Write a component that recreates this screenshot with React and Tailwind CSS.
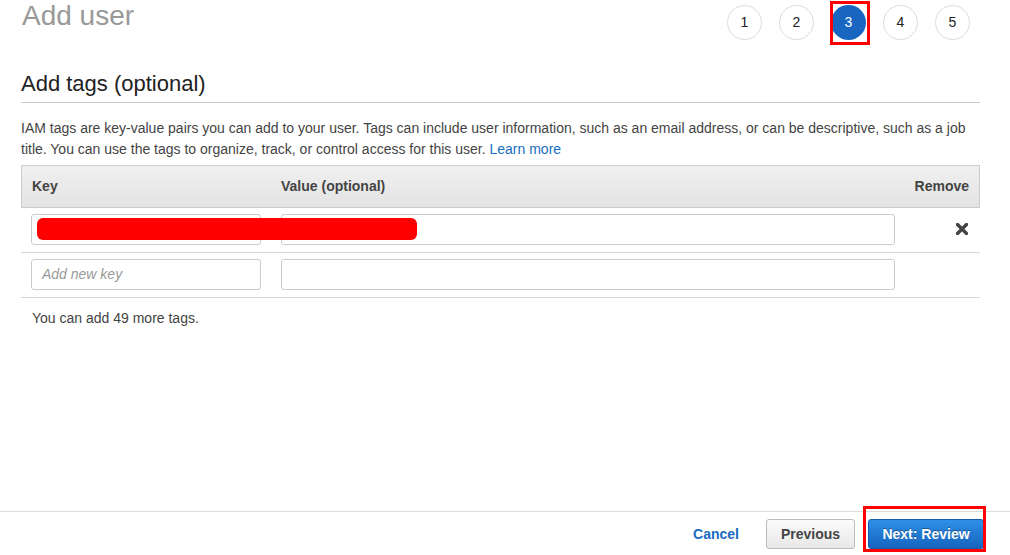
import React from "react";

const font = { fontFamily: '"Liberation Sans", Arial, sans-serif' };

function Step({ n, active }) {
  if (active) {
    return (
      <div className="relative w-[35px] h-[35px]">
        <div className="w-[35px] h-[35px] rounded-full bg-[#1866bf] text-white flex items-center justify-center text-[14px]">
          {n}
        </div>
        <div className="absolute left-[-1px] top-[-4px] w-[40px] h-[44px] border-[3px] border-[#ff0000]" />
      </div>
    );
  }
  return (
    <div className="w-[35px] h-[35px] rounded-full border border-[#dcdcdc] bg-white text-[#222] flex items-center justify-center text-[14px]">
      {n}
    </div>
  );
}

function XIcon() {
  return (
    <svg width="12" height="12" viewBox="0 0 12 12">
      <path d="M1.5 1.5 L10.5 10.5 M10.5 1.5 L1.5 10.5" stroke="#444" strokeWidth="3.4" strokeLinecap="round" />
    </svg>
  );
}

export default function App() {
  return (
    <div style={font} className="w-[1010px] h-[555px] bg-white flex flex-col overflow-hidden text-[#444]">
      <div className="flex-1 pl-[21px] pr-[30px]">
        <div className="h-[72px] flex items-start justify-between">
          <div className="text-[28px] leading-[30px] pt-[1px] text-[#999] pl-[1px]">Add user</div>
          <div className="flex gap-[17px] mt-[5px] mr-[10px]">
            <Step n={1} />
            <Step n={2} />
            <Step n={3} active />
            <Step n={4} />
            <Step n={5} />
          </div>
        </div>
        <div className="text-[22px] leading-[24px] text-[#222] pb-[6px] border-b border-[#cccccc]">
          Add tags (optional)
        </div>
        <p className="mt-[15px] text-[14px] leading-[21px] text-[#444] whitespace-nowrap">
          IAM tags are key-value pairs you can add to your user. Tags can include user information, such as an email address, or can be descriptive, such as a job
          <br />
          title. You can use the tags to organize, track, or control access for this user.{" "}
          <span className="text-[#1a6ec1]">Learn more</span>
        </p>
        <div className="mt-[5px]">
          <div className="grid grid-cols-[250px_634px_1fr] h-[43px] items-center border border-[#cccccc] bg-linear-to-b from-[#f0f0f0] to-[#e3e3e3] text-[14px] font-bold text-[#444]">
            <div className="pl-[10px]">Key</div>
            <div className="pl-[9px]">Value (optional)</div>
            <div className="text-right pr-[10px]">Remove</div>
          </div>
          <div className="grid grid-cols-[250px_634px_1fr] items-center border-b border-[#d5d5d5] pt-[6px] pb-[7px]">
            <div className="pl-[10px] pr-[10px]">
              <div className="h-[31px] border border-[#cccccc] rounded-[3px] bg-white" />
            </div>
            <div className="pl-[10px] pr-[10px]">
              <div className="h-[31px] border border-[#cccccc] rounded-[3px] bg-white" />
            </div>
            <div className="flex justify-end pr-[12px] -mt-[2px]">
              <XIcon />
            </div>
          </div>
          <div className="relative">
            <div className="absolute left-[16px] top-[-35px] w-[380px] h-[22px] rounded-[6px] bg-[#ff0000]" />
          </div>
          <div className="grid grid-cols-[250px_634px_1fr] items-center border-b border-[#d5d5d5] pt-[6px] pb-[7px]">
            <div className="pl-[10px] pr-[10px]">
              <div className="h-[31px] border border-[#cccccc] rounded-[3px] bg-white flex items-center pl-[10px] text-[14px] italic text-[#999]">
                Add new key
              </div>
            </div>
            <div className="pl-[10px] pr-[10px]">
              <div className="h-[31px] border border-[#cccccc] rounded-[3px] bg-white" />
            </div>
            <div />
          </div>
        </div>
        <div className="mt-[10px] pl-[11px] text-[14px] leading-[21px] text-[#444]">You can add 49 more tags.</div>
      </div>
      <div className="h-[44px] border-t border-[#dddddd] flex items-start justify-end pt-[7px] pr-[26px]">
        <div className="h-[30px] flex items-center text-[14px] font-bold text-[#1a6bc1] mr-[27px]">Cancel</div>
        <div className="h-[30px] w-[89px] flex items-center justify-center rounded-[3px] border border-[#bbbbbb] bg-linear-to-b from-[#fbfbfb] to-[#e8e8e8] text-[14px] font-bold text-[#444] mr-[13px]">
          Previous
        </div>
        <div className="relative">
          <div className="h-[30px] w-[116px] flex items-center justify-center rounded-[3px] border border-[#1a5da8] bg-linear-to-b from-[#2f8fe6] to-[#1565bf] text-[14px] font-bold text-white [text-shadow:0_-1px_0_rgba(0,0,0,0.35)]">
            Next: Review
          </div>
          <div className="absolute left-[-5px] top-[-13px] w-[123px] h-[46px] border-[3px] border-[#ff0000]" />
        </div>
      </div>
    </div>
  );
}
